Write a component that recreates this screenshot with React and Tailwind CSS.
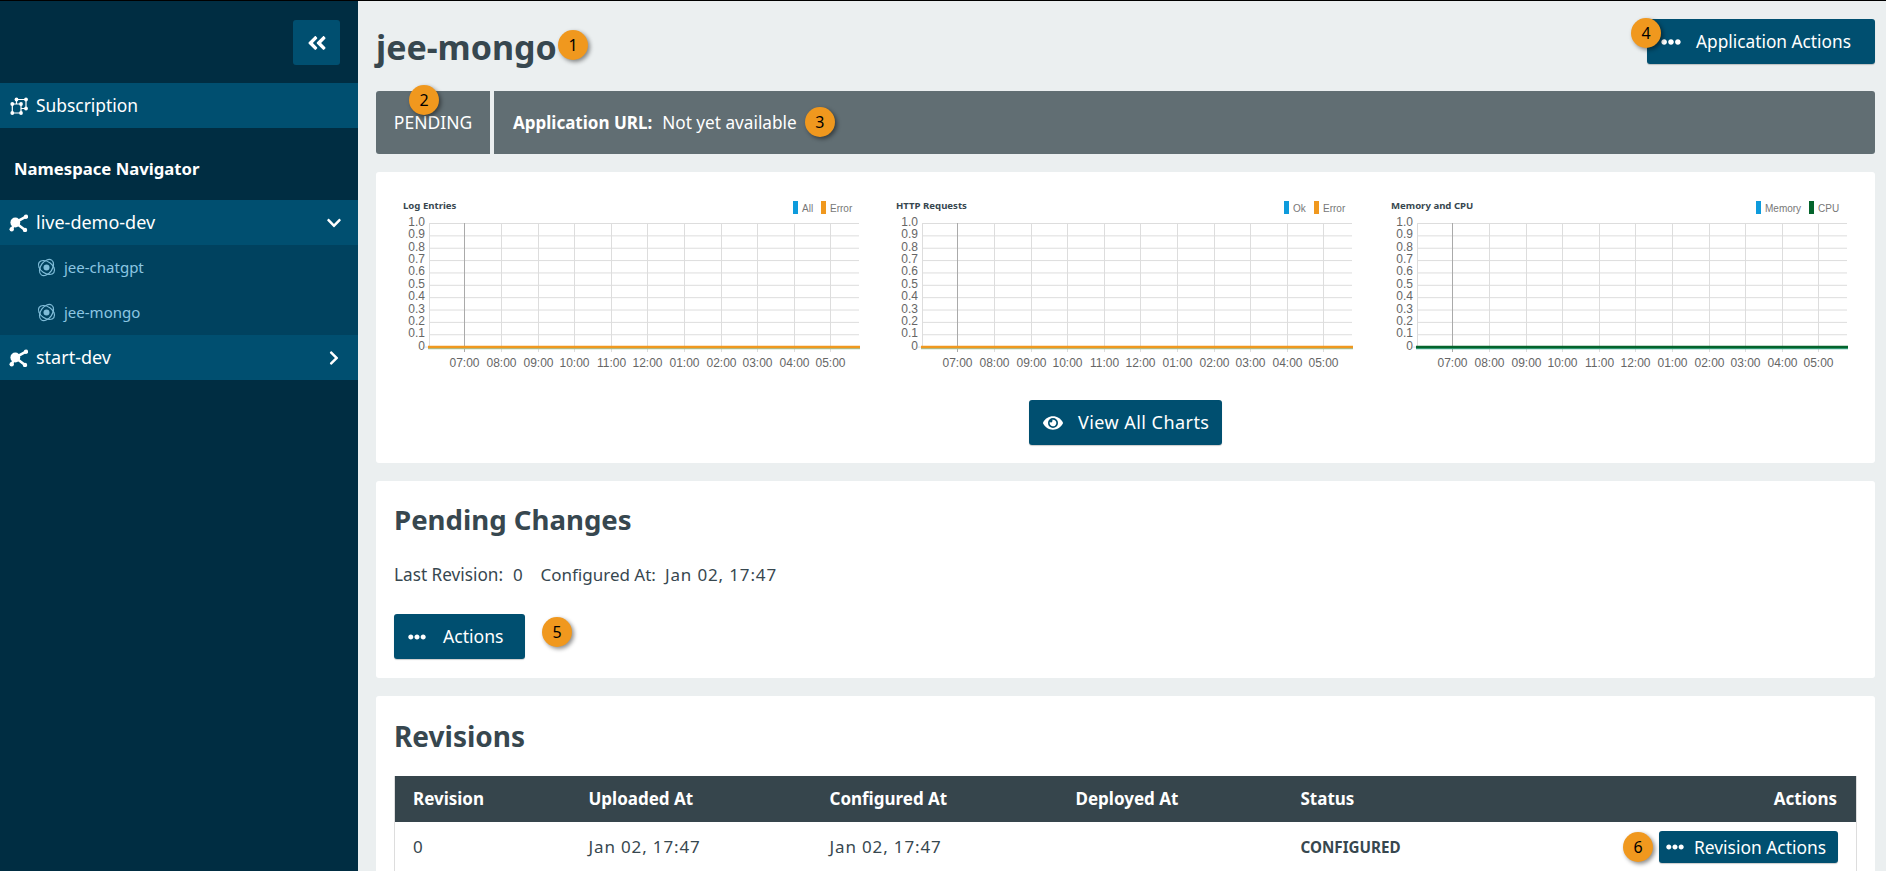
import { FaAngleDoubleLeft, FaChevronDown, FaChevronRight, FaEllipsisH, FaEye } from 'react-icons/fa';

const hours = ['07:00', '08:00', '09:00', '10:00', '11:00', '12:00', '01:00', '02:00', '03:00', '04:00', '05:00'];
const yTicks = ['1.0', '0.9', '0.8', '0.7', '0.6', '0.5', '0.4', '0.3', '0.2', '0.1', '0'];

const charts = [
  { title: 'Log Entries', line: '#f0981e', under: '#9fc3a0', legend: [['All', '#0e9bdc', 403], ['Error', '#f0981e', 431]] },
  { title: 'HTTP Requests', line: '#f0981e', under: '#9fc3a0', legend: [['Ok', '#0e9bdc', 401], ['Error', '#f0981e', 431]] },
  { title: 'Memory and CPU', line: '#04642c', under: '#3fa98c', legend: [['Memory', '#0e9bdc', 378], ['CPU', '#04642c', 431]] },
];

function Badge({ n, className }) {
  return (
    <span className={`absolute flex h-[30px] w-[30px] items-center justify-center rounded-full bg-[#f0981e] text-[16px] font-normal text-black shadow-[2px_2px_4px_rgba(0,0,0,0.45)] ${className}`}>
      {n}
    </span>
  );
}

function SubscriptionIcon() {
  return (
    <svg width="20" height="20" viewBox="0 0 20 20" fill="none" stroke="white" strokeWidth="1.2">
      <path d="M7.5 8V3.5H17V12.5H12M3.3 8H12V17H3.3Z" />
      <g fill="white" stroke="none">
        <circle cx="7.5" cy="3.5" r="1.9" />
        <circle cx="17" cy="3.5" r="1.9" />
        <circle cx="17" cy="12.5" r="1.9" />
        <circle cx="12" cy="8" r="1.9" />
        <circle cx="3.3" cy="8" r="1.9" />
        <circle cx="3.3" cy="17" r="1.9" />
        <circle cx="12" cy="17" r="1.9" />
      </g>
    </svg>
  );
}

function NamespaceIcon() {
  return (
    <svg width="19" height="19" viewBox="0 0 19 19" fill="white">
      <circle cx="6.3" cy="9.5" r="4.9" />
      <circle cx="17" cy="3.7" r="2.2" />
      <circle cx="2.7" cy="16.2" r="2.2" />
      <circle cx="16" cy="17" r="2.2" />
      <path d="M6.3 9.5 17 3.7M6.3 9.5 2.7 16.2M6.3 9.5 16 17" stroke="white" strokeWidth="2.6" />
    </svg>
  );
}

function AtomIcon() {
  return (
    <svg width="19" height="19" viewBox="0 0 19 19" fill="none" stroke="#7fbcd8" strokeWidth="1.2">
      <ellipse cx="9.5" cy="9.5" rx="9" ry="5.8" transform="rotate(35 9.5 9.5)" />
      <ellipse cx="9.5" cy="9.5" rx="9" ry="5.8" transform="rotate(-55 9.5 9.5)" />
      <circle cx="9.5" cy="9.5" r="3" fill="#7fbcd8" stroke="none" />
    </svg>
  );
}

function Chart({ title, line, under, legend }) {
  return (
    <svg width="494" height="180" viewBox="0 0 494 180" className="block">
      <text x="13" y="18.5" fontSize="9.6" fontWeight="700" fill="#37474f" fontFamily="'Noto Sans', sans-serif">{title}</text>
      {legend.map(([label, color, x]) => (
        <g key={label}>
          <rect x={x} y="11" width="5" height="13" fill={color} />
          <text x={x + 9} y="21.5" fontSize="10" fill="#777777" fontFamily="'Liberation Sans', sans-serif">{label}</text>
        </g>
      ))}
      {yTicks.map((t, i) => (
        <g key={t}>
          <line x1={i === 10 ? 35 : 39} x2="469" y1={33.5 + i * 12.36} y2={33.5 + i * 12.36} stroke="#dddddd" />
          <text x="35" y={36 + i * 12.36} fontSize="12" textAnchor="end" fill="#666666" fontFamily="'Liberation Sans', sans-serif">{t}</text>
        </g>
      ))}
      <line x1="39.5" x2="39.5" y1="33" y2="157" stroke="#dddddd" />
      {hours.map((h, i) => {
        const x = Math.round(74.3 + i * 36.6) + 0.5;
        return (
          <g key={h}>
            <line x1={x} x2={x} y1="33" y2="162" stroke={i === 0 ? '#aaaaaa' : '#dddddd'} />
            <text x={x} y="177" fontSize="12" textAnchor="middle" fill="#666666" fontFamily="'Liberation Sans', sans-serif">{h}</text>
          </g>
        );
      })}
      <line x1="38" x2="470" y1="158.5" y2="158.5" stroke={under} strokeWidth="1.5" />
      <line x1="38" x2="470" y1="157" y2="157" stroke={line} strokeWidth="2.6" />
    </svg>
  );
}

function ActionButton({ icon, label, className }) {
  return (
    <button className={`flex items-center rounded-[3px] bg-[#004f70] text-white shadow-[0_1px_1px_rgba(0,0,0,0.2)] ${className}`}>
      {icon}
      <span>{label}</span>
    </button>
  );
}

export default function App() {
  return (
    <div className="flex h-[871px] overflow-hidden border-t border-black bg-[#ebeff0] font-['Noto_Sans',sans-serif] text-[17px] text-[#37474f]">
      <aside className="w-[358px] shrink-0 bg-[#002d42] text-white">
        <div className="flex justify-end pt-[19px] pr-[18px]">
          <button className="flex h-[45px] w-[47px] items-center justify-center rounded-[3px] bg-[#004f70]">
            <FaAngleDoubleLeft className="h-[22px] w-[22px]" />
          </button>
        </div>
        <div className="mt-[18px] flex h-[45px] items-center gap-[7px] bg-[#004f70] pl-[9px] text-[17.4px]">
          <SubscriptionIcon />
          <span>Subscription</span>
        </div>
        <div className="flex h-[72px] items-center pt-[10px] pl-[14px] text-[16.7px] font-bold">Namespace Navigator</div>
        <div className="flex h-[45px] items-center gap-[8px] bg-[#004f70] pl-[9px] text-[18px]">
          <NamespaceIcon />
          <span>live-demo-dev</span>
          <FaChevronDown className="mr-[16px] ml-auto h-[16px] w-[16px]" />
        </div>
        <div className="bg-[#00425f] text-[15px] text-[#8cc6e2]">
          <div className="flex h-[45px] items-center gap-[8px] pb-[1px] pl-[37px]"><AtomIcon />jee-chatgpt</div>
          <div className="flex h-[45px] items-center gap-[8px] pb-[1px] pl-[37px]"><AtomIcon />jee-mongo</div>
        </div>
        <div className="flex h-[45px] items-center gap-[8px] bg-[#004f70] pl-[9px] text-[18px]">
          <NamespaceIcon />
          <span>start-dev</span>
          <FaChevronRight className="mr-[16px] ml-auto h-[16px] w-[16px]" />
        </div>
      </aside>

      <main className="min-w-0 flex-1 pr-[11px] pl-[18px]">
        <div className="flex h-[90px] items-start justify-between">
          <h1 className="relative mt-[21px] text-[34px] leading-[50px] font-bold">
            jee-mongo
            <Badge n="1" className="top-[8px] left-[182px]" />
          </h1>
          <div className="relative mt-[18px]">
            <ActionButton
              label="Application Actions"
              icon={<FaEllipsisH className="mr-[15px] h-[20px] w-[20px]" />}
              className="h-[45px] w-[228px] pl-[14px] text-[17.3px]"
            />
            <Badge n="4" className="-top-[1px] -left-[16px]" />
          </div>
        </div>

        <div className="flex h-[63px] gap-[4px] text-white">
          <div className="relative flex w-[114px] items-center justify-center rounded-l-[3px] bg-[#616e73] text-[17.5px]">
            PENDING
            <Badge n="2" className="top-[-6px] left-[33px]" />
          </div>
          <div className="flex flex-1 items-center rounded-r-[3px] bg-[#616e73] pl-[19px]">
            <span className="font-bold">Application URL:</span>
            <span className="relative ml-[10px] text-[17.2px]">
              Not yet available
              <Badge n="3" className="top-[-3px] right-[-38px]" />
            </span>
          </div>
        </div>

        <section className="mt-[18px] h-[291px] rounded-[3px] bg-white pt-[18px] pl-[14px]">
          <div className="grid grid-cols-[493px_495px_494px]">
            {charts.map((c) => <Chart key={c.title} {...c} />)}
          </div>
          <div className="mt-[30px] flex justify-center pr-[14px]">
            <ActionButton
              label="View All Charts"
              icon={<FaEye className="mr-[15px] h-[20px] w-[20px]" />}
              className="h-[45px] w-[193px] pl-[14px] text-[18px] tracking-[0.45px]"
            />
          </div>
        </section>

        <section className="mt-[18px] h-[197px] rounded-[3px] bg-white px-[18px]">
          <h2 className="pt-[18px] text-[27.6px] leading-[40px] font-bold">Pending Changes</h2>
          <p className="mt-[22px] leading-[28px]">
            <span className="text-[17.2px]">Last Revision:</span>
            <span className="ml-[10px] tracking-[0.7px]">0</span>
            <span className="ml-[17px]">Configured At:</span>
            <span className="ml-[9px] tracking-[0.85px]">Jan 02, 17:47</span>
          </p>
          <div className="relative mt-[25px] w-fit">
            <ActionButton
              label="Actions"
              icon={<FaEllipsisH className="mr-[17px] h-[18px] w-[18px]" />}
              className="h-[45px] w-[131px] pl-[14px] text-[17.6px]"
            />
            <Badge n="5" className="top-[3px] left-[148px]" />
          </div>
        </section>

        <section className="mt-[18px] rounded-t-[3px] bg-white px-[18px] pb-[18px]">
          <h2 className="pt-[20px] text-[28px] leading-[40px] font-bold">Revisions</h2>
          <table className="mt-[20px] w-[1463px] table-fixed border-x border-[#dddddd] text-left">
            <colgroup>
              <col className="w-[175px]" />
              <col className="w-[241px]" />
              <col className="w-[246px]" />
              <col className="w-[225px]" />
              <col className="w-[225px]" />
              <col />
            </colgroup>
            <thead className="bg-[#36454c] text-white">
              <tr className="h-[46px]">
                <th className="pl-[18px]">Revision</th>
                <th className="pl-[19px]">Uploaded At</th>
                <th className="pl-[19px]">Configured At</th>
                <th className="pl-[19px]">Deployed At</th>
                <th className="pl-[19px]">Status</th>
                <th className="pr-[19px] text-right">Actions</th>
              </tr>
            </thead>
            <tbody>
              <tr className="h-[50px]">
                <td className="pl-[18px]">0</td>
                <td className="pl-[19px] tracking-[0.85px]">Jan 02, 17:47</td>
                <td className="pl-[19px] tracking-[0.85px]">Jan 02, 17:47</td>
                <td className="pl-[19px]"></td>
                <td className="pl-[19px] text-[15.2px] font-bold">CONFIGURED</td>
                <td className="pr-[18px]">
                  <div className="relative ml-auto w-fit">
                    <ActionButton
                      label="Revision Actions"
                      icon={<FaEllipsisH className="mr-[10px] h-[18px] w-[18px]" />}
                      className="h-[32px] w-[179px] pl-[7px] text-[17.4px]"
                    />
                    <Badge n="6" className="top-[1px] left-[-36px]" />
                  </div>
                </td>
              </tr>
            </tbody>
          </table>
        </section>
      </main>
    </div>
  );
}
